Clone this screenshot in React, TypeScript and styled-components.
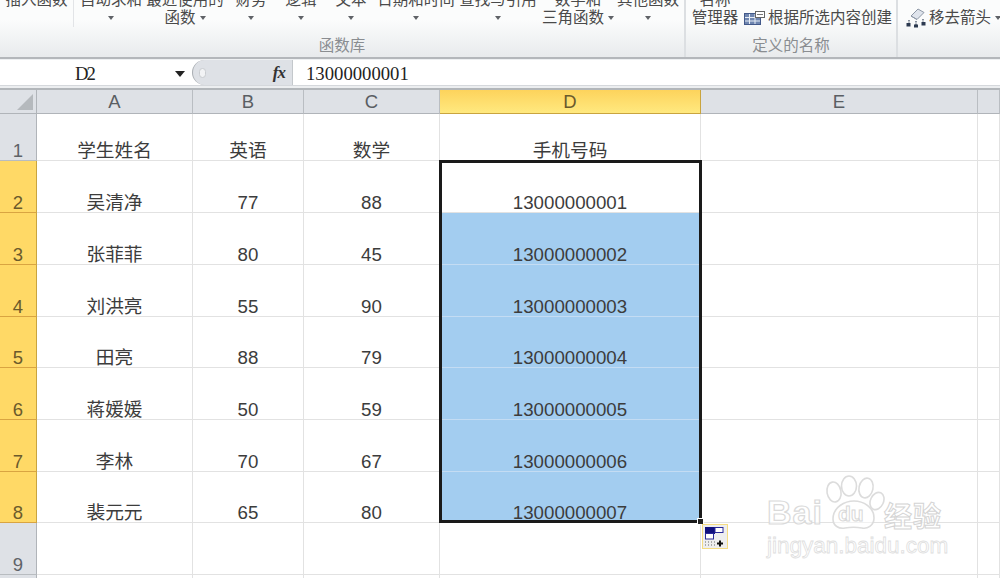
import React from 'react';
import styled, { createGlobalStyle } from 'styled-components';

const Global = createGlobalStyle`
  html, body { margin: 0; padding: 0; background: #fff; }
  body { width: 1000px; height: 578px; overflow: hidden; font-family: "Liberation Sans", "Noto Sans CJK SC", sans-serif; }
  * { box-sizing: border-box; }
`;
const Page = styled.div`position: relative; width: 1000px; height: 578px; overflow: hidden; display: flex; flex-direction: column;`;
const Ribbon = styled.div`
  height: 59px; flex: none; display: flex; overflow: hidden;
  background: linear-gradient(#fbfcfc 0, #fbfcfc 20px, #e9ebed 56px);
  border-bottom: 2px solid #b4b7bb;
`;
const Group = styled.div<{ $w: number }>`
  width: ${p => p.$w}px; flex: none; height: 57px; display: flex; flex-direction: column;
  border-right: 2px solid #dcdfe2;
  &:last-child { border-right: 0; }
`;
const GroupItems = styled.div`display: flex; height: 46px; margin-top: -9px; flex: none;`;
const GroupLabel = styled.div`height: 18px; line-height: 18px; text-align: center; font-size: 15.5px; color: #8a8d91; white-space: nowrap;`;
const Col = styled.div<{ $w: number; $sep?: boolean }>`
  width: ${p => p.$w}px; flex: none; height: 36px; display: flex; flex-direction: column; align-items: center;
  ${p => p.$sep ? 'border-right: 1px solid #e2e4e7;' : ''}
`;
const Line = styled.div`
  height: 18px; line-height: 18px; display: flex; align-items: center; justify-content: center; gap: 4px;
  font-size: 15.5px; color: #4a4a4a; white-space: nowrap;
`;
const Caret = styled.span`width: 0; height: 0; flex: none; border-left: 3.5px solid transparent; border-right: 3.5px solid transparent; border-top: 4px solid #5f6267;`;
const Row2 = styled.div<{ $pad?: number }>`display: flex; height: 36px; padding: 18px 0 0 ${p => p.$pad ?? 0}px; align-items: center; gap: 3px;`;
const FormulaBar = styled.div`
  height: 27px; flex: none; display: flex; background: #fff; border-top: 1px solid #eef0f2; border-bottom: 1px solid #d5d8dc;
`;
const NameBox = styled.div`
  width: 192px; flex: none; display: flex; align-items: center; justify-content: center; position: relative;
  font: 18.7px "Liberation Serif", serif; letter-spacing: -2px; color: #222; padding: 2px 23px 0 0;
`;
const NameCaret = styled.span`position: absolute; left: 175px; top: 11px; width: 0; height: 0; border-left: 5px solid transparent; border-right: 5px solid transparent; border-top: 6px solid #222;`;
const FxArea = styled.div`
  width: 101px; flex: none; display: flex; align-items: center; justify-content: flex-end;
  background: #dee1e6; border-left: 1px solid #a9adb2; border-radius: 13px 0 0 13px; padding-right: 6px;
  position: relative; border-right: 1px solid #c4c8cc;
`;
const Grip = styled.span`position: absolute; left: 6px; top: 8px; width: 7px; height: 10px; border-radius: 4px; background: #f2f3f5; border: 1px solid #c9ccd0;`;
const Fx = styled.span`font: italic bold 17px "Liberation Serif", serif; color: #333; letter-spacing: -1px; line-height: 1; margin-right: 1px;`;
const FormulaText = styled.div`padding: 1px 0 0 13px; font: 18.7px/26px "Liberation Serif", serif; color: #222;`;
const Gap = styled.div`flex: none; background: #eceef0; border-bottom: 2px solid #b2b6ba; height: 4px;`;
const Sheet = styled.div`
  flex: none; display: grid; position: relative;
  grid-template-columns: 37px 156px 111px 136px 261px 277px 22px;
  grid-template-rows: 24px 47px 52px 52px 52px 51px 52px 52px 51px 52px 4px;
`;
const Corner = styled.div`background: #dee1e6; border-right: 1px solid #b0b4b9; border-bottom: 1px solid #b0b4b9; position: relative; &::after { content: ''; position: absolute; right: 3px; bottom: 3px; border-style: solid; border-width: 0 0 16px 16px; border-color: transparent transparent #b5b9bd transparent; }`;
const ColHead = styled.div<{ $on?: boolean }>`
  display: flex; align-items: center; justify-content: center; font-size: 18.5px; color: ${p => p.$on ? '#6b5a2c' : '#5a5e63'};
  background: ${p => p.$on ? 'linear-gradient(#fdd35c, #ffe97f)' : '#dee1e6'};
  border-right: 1px solid ${p => p.$on ? '#c9a43f' : '#b9bdc2'}; border-bottom: 1px solid ${p => p.$on ? '#c9a43f' : '#b0b4b9'};
`;
const RowHead = styled.div<{ $on?: boolean }>`
  display: flex; align-items: flex-end; justify-content: center; font-size: 18.5px; line-height: 18px; color: ${p => p.$on ? '#6b5a2c' : '#5f6368'};
  background: ${p => p.$on ? '#ffd966' : '#dee1e6'};
  border-right: 1px solid ${p => p.$on ? '#c9a43f' : '#b0b4b9'}; border-bottom: 1px solid ${p => p.$on ? '#d9a441' : '#b8bcc0'};
`;
const Cell = styled.div<{ $sel?: boolean }>`
  display: flex; align-items: flex-end; justify-content: center; font-size: 18.7px; line-height: 18px; color: #3c3c3c; white-space: nowrap;
  font-family: "Liberation Sans", "Noto Sans CJK SC", sans-serif;
  background: ${p => p.$sel ? '#a3cdf0' : '#fff'};
  border-right: 1px solid ${p => p.$sel ? '#a3cdf0' : '#e2e2e2'}; border-bottom: 1px solid ${p => p.$sel ? '#c4dcf3' : '#e2e2e2'};
`;
const SelBox = styled.div`
  position: absolute; grid-column: 5 / 6; grid-row: 3 / 10; top: -1px; bottom: 0; left: -1px; right: -1px;
  border: 3px solid #1a1a1a; z-index: 2; pointer-events: none;
`;
const Handle = styled.span`position: absolute; right: -5px; bottom: -5px; width: 7px; height: 7px; background: #222; border: 1px solid #fff;`;
const PasteBtn = styled.div`
  position: absolute; left: 702px; top: 434px; width: 26px; height: 25px; z-index: 3; background: #eeeeee; border: 1px solid #f5dc82;
  display: flex; align-items: center; justify-content: center;
`;
const Mark = styled.div`position: absolute; left: 766px; top: 475px; width: 185px; height: 90px; z-index: 4; pointer-events: none;`;
const MarkBai = styled.div`
  position: absolute; left: 1px; top: 19px; font: bold 34px/36px "Liberation Sans", sans-serif; color: rgba(255,255,255,.6); -webkit-text-stroke: 1.2px #dadada; letter-spacing: 1px;
`;
const MarkDu = styled.div`position: absolute; left: 72px; top: 27px; font: bold 21px/24px "Liberation Sans", sans-serif; color: transparent; -webkit-text-stroke: 1px #d8d8d8;`;
const MarkCn = styled.div`position: absolute; left: 118px; top: 24px; font: bold 28px/32px "Noto Sans CJK SC", sans-serif; color: rgba(255,255,255,.6); -webkit-text-stroke: 1px #d4d4d4; letter-spacing: 1px; white-space: nowrap;`;
const MarkUrl = styled.div`position: absolute; left: 1px; top: 58px; font: 22.5px/26px "Liberation Sans", sans-serif; color: transparent; -webkit-text-stroke: .8px #dedede; white-space: nowrap;`;

const CreateIcon = () => (
  <svg width="21" height="16" viewBox="0 0 21 16">
    <rect x="0.5" y="3.5" width="16" height="11" fill="#6f86b0" stroke="#42598a" />
    <path d="M1 7.5h15M1 11h15M5.5 4v10M11 4v10" stroke="#e8eef6" strokeWidth="1" />
    <rect x="11.5" y="1.5" width="9" height="6" fill="#fff" stroke="#666" />
    <path d="M13 4.5h6" stroke="#777" />
  </svg>
);
const ArrowIcon = () => (
  <svg width="20" height="20" viewBox="0 0 20 20">
    <path d="M5 8 12 1l6 3.5-7 7z" fill="#dfe4ec" stroke="#8d97a6" />
    <path d="M5 8l6 3.5" stroke="#8d97a6" />
    <path d="M3 12v3M10 13v4M17 11v3" stroke="#3d4a5f" strokeWidth="1.2" strokeDasharray="1.5 1" />
    <rect x="0.5" y="15" width="4" height="3.5" fill="#2c3a50" />
    <rect x="8" y="16.5" width="4" height="3" fill="#2c3a50" />
    <rect x="15.5" y="14" width="4" height="3.5" fill="#2c3a50" />
  </svg>
);
const PasteIcon = () => (
  <svg width="20" height="20" viewBox="0 0 20 20">
    <rect x="0.5" y="0.5" width="9" height="6" fill="#10107e" stroke="#10107e" />
    <rect x="10" y="0.5" width="8" height="5" fill="#fff" stroke="#2a2a9a" />
    <rect x="0.5" y="6.5" width="8" height="5.5" fill="#fff" stroke="#2a2a9a" />
    <path d="M0 15h1M3 15h1M6 15h1M9 15h1M0 18h1M3 18h1M6 18h1M9 18h1" stroke="#666" />
    <path d="M15 13.5v6M12 16.5h6" stroke="#111" strokeWidth="2" />
  </svg>
);
const Paw = () => (
  <svg style={{ position: 'absolute', left: 0, top: 0 }} width="185" height="60" viewBox="0 0 185 60" fill="rgba(255,255,255,.5)" stroke="#dcdcdc" strokeWidth="1.6">
    <ellipse cx="68" cy="17" rx="7" ry="10" transform="rotate(-10 68 17)" />
    <ellipse cx="83" cy="11" rx="7.5" ry="10" />
    <ellipse cx="100" cy="13" rx="7" ry="10" transform="rotate(12 100 13)" />
    <ellipse cx="111" cy="26" rx="6.5" ry="9" transform="rotate(25 111 26)" />
    <path d="M67 44c0-12 12-18 21-18s20 6 20 17c0 8-7 11-12 10-6-1-11-1-17 0-6 1-12-2-12-9z" />
  </svg>
);

const rows = [
  ['吴清净', '77', '88', '13000000001'],
  ['张菲菲', '80', '45', '13000000002'],
  ['刘洪亮', '55', '90', '13000000003'],
  ['田亮', '88', '79', '13000000004'],
  ['蒋媛媛', '50', '59', '13000000005'],
  ['李林', '70', '67', '13000000006'],
  ['裴元元', '65', '80', '13000000007'],
];
const funcs: [number, string, string, boolean, boolean?][] = [
  [74, '插入函数', '', false, true],
  [74, '自动求和', '', true],
  [74, '最近使用的', '函数', true],
  [58, '财务', '', true],
  [42, '逻辑', '', true],
  [58, '文本', '', true],
  [72, '日期和时间', '', true],
  [92, '查找与引用', '', true],
  [68, '数学和', '三角函数', true],
  [72, '其他函数', '', true],
];

export default function App() {
  return (
    <Page>
      <Global />
      <Ribbon>
        <Group $w={686}>
          <GroupItems>
            {funcs.map(([w, a, b, c, sep]) => (
              <Col key={a} $w={w} $sep={sep}>
                <Line>{a}</Line>
                <Line>{b}{c && <Caret />}</Line>
              </Col>
            ))}
          </GroupItems>
          <GroupLabel>函数库</GroupLabel>
        </Group>
        <Group $w={212}>
          <GroupItems>
            <Col $w={58}>
              <Line>名称</Line>
              <Line>管理器</Line>
            </Col>
            <Row2>
              <CreateIcon />
              <Line>根据所选内容创建</Line>
            </Row2>
          </GroupItems>
          <GroupLabel>定义的名称</GroupLabel>
        </Group>
        <Group $w={102}>
          <GroupItems>
            <Row2 $pad={8}>
              <ArrowIcon />
              <Line>移去箭头<Caret /></Line>
            </Row2>
          </GroupItems>
        </Group>
      </Ribbon>
      <FormulaBar>
        <NameBox>D2<NameCaret /></NameBox>
        <FxArea><Grip /><Fx>fx</Fx></FxArea>
        <FormulaText>13000000001</FormulaText>
      </FormulaBar>
      <Gap />
      <Sheet>
        <Corner />
        {['A', 'B', 'C', 'D', 'E', ''].map(c => <ColHead key={c} $on={c === 'D'}>{c}</ColHead>)}

        <RowHead>1</RowHead>
        <Cell>学生姓名</Cell><Cell>英语</Cell><Cell>数学</Cell><Cell>手机号码</Cell><Cell /><Cell />

        {rows.map((r, i) => (
          <React.Fragment key={r[0]}>
            <RowHead $on>{i + 2}</RowHead>
            <Cell>{r[0]}</Cell><Cell>{r[1]}</Cell><Cell>{r[2]}</Cell>
            <Cell $sel={i > 0}>{r[3]}</Cell><Cell /><Cell />
          </React.Fragment>
        ))}

        <RowHead>9</RowHead>
        <Cell /><Cell /><Cell /><Cell /><Cell /><Cell />
        <RowHead />
        <Cell /><Cell /><Cell /><Cell /><Cell /><Cell />

        <SelBox><Handle /></SelBox>
        <PasteBtn><PasteIcon /></PasteBtn>
      </Sheet>
      <Mark>
        <Paw />
        <MarkBai>Bai</MarkBai>
        <MarkDu>du</MarkDu>
        <MarkCn>经验</MarkCn>
        <MarkUrl>jingyan.baidu.com</MarkUrl>
      </Mark>
    </Page>
  );
}
